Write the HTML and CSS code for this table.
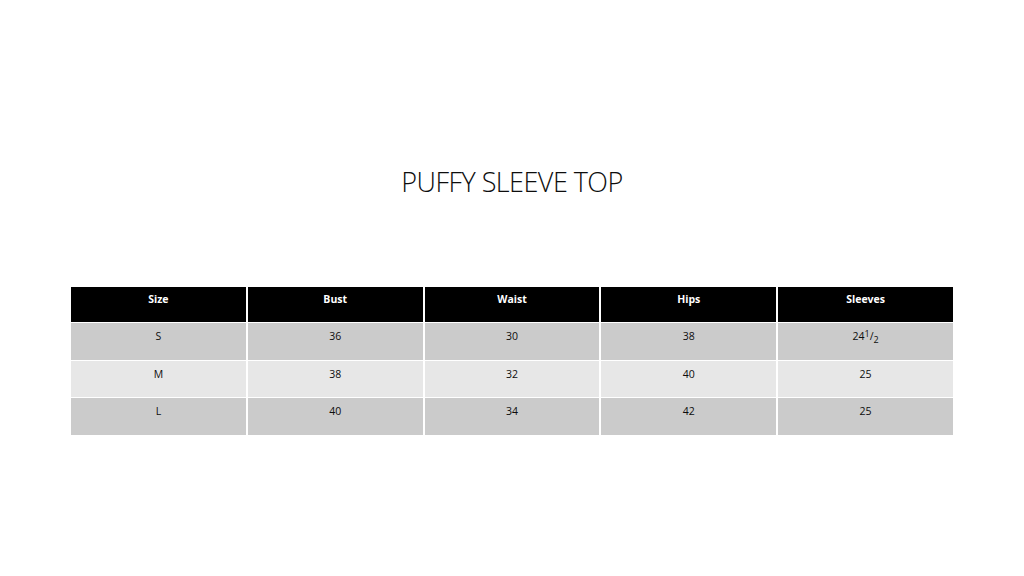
FILE: index.html
```html
<!DOCTYPE html>
<html>
<head>
<meta charset="utf-8">
<link rel="stylesheet" href="styles.css">
</head>
<body>
<main class="slide">
  <h1 class="title">PUFFY SLEEVE TOP</h1>
  <div class="chart">
    <div class="cell head">Size</div>
    <div class="cell head">Bust</div>
    <div class="cell head">Waist</div>
    <div class="cell head">Hips</div>
    <div class="cell head">Sleeves</div>

    <div class="cell dark">S</div>
    <div class="cell dark">36</div>
    <div class="cell dark">30</div>
    <div class="cell dark">38</div>
    <div class="cell dark">24<sup class="num">1</sup>/<sub class="den">2</sub></div>

    <div class="cell light">M</div>
    <div class="cell light">38</div>
    <div class="cell light">32</div>
    <div class="cell light">40</div>
    <div class="cell light">25</div>

    <div class="cell dark">L</div>
    <div class="cell dark">40</div>
    <div class="cell dark">34</div>
    <div class="cell dark">42</div>
    <div class="cell dark">25</div>
  </div>
</main>
</body>
</html>
```

FILE: styles.css
```css
html, body {
  margin: 0;
  padding: 0;
  background: #ffffff;
}
.slide {
  width: 1024px;
  height: 576px;
  display: flex;
  flex-direction: column;
  align-items: center;
  box-sizing: border-box;
  padding-top: 163px;
}
.title {
  margin: 0;
  font-family: "Open Sans", "Liberation Sans", sans-serif;
  font-weight: 300;
  font-size: 27px;
  line-height: 38px;
  color: #0d0d0d;
  letter-spacing: -0.55px;
}
.chart {
  margin-top: 86px;
  width: 882px;
  display: grid;
  grid-template-columns: repeat(5, 1fr);
  grid-template-rows: 35px 37px 36px 37px;
  column-gap: 2px;
  row-gap: 1px;
}
.cell {
  font-family: "Open Sans", "Liberation Sans", sans-serif;
  font-size: 10.5px;
  line-height: 14px;
  text-align: center;
  padding-top: 6px;
  color: #0d0d0d;
}
.head {
  background: #000;
  color: #fff;
  font-weight: 700;
  padding-top: 5px;
}
.dark { background: #cbcbcb; }
.light { background: #e7e7e7; }
.num {
  font-size: 9px;
  vertical-align: 3px;
  line-height: 0;
}
.den {
  font-size: 9px;
  vertical-align: -3px;
  line-height: 0;
}
```
